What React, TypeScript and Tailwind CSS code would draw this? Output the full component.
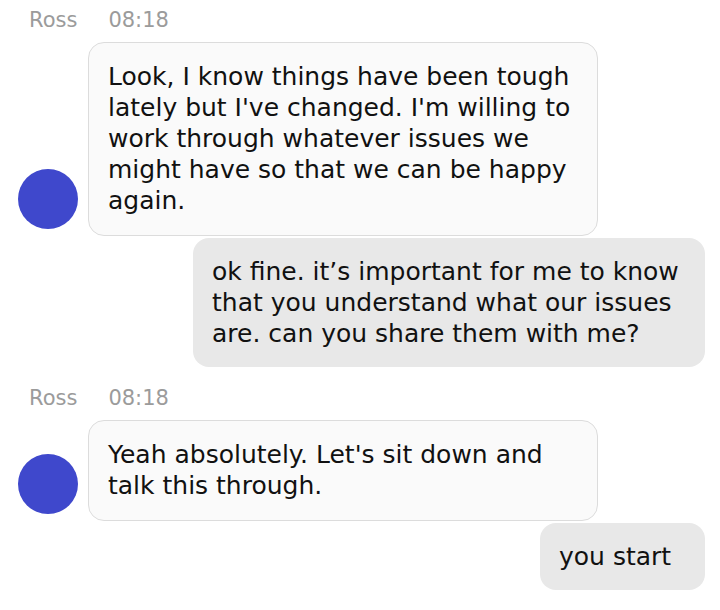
const font = { fontFamily: '"DejaVu Sans", "Liberation Sans", sans-serif' };

type Msg =
  | { kind: "head"; name: string; time: string }
  | { kind: "them"; text: string }
  | { kind: "me"; text: string };

const messages: Msg[] = [
  { kind: "head", name: "Ross", time: "08:18" },
  {
    kind: "them",
    text: "Look, I know things have been tough lately but I've changed. I'm willing to work through whatever issues we might have so that we can be happy again.",
  },
  {
    kind: "me",
    text: "ok fine. it’s important for me to know that you understand what our issues are. can you share them with me?",
  },
  { kind: "head", name: "Ross", time: "08:18" },
  { kind: "them", text: "Yeah absolutely. Let's sit down and talk this through." },
  { kind: "me", text: "you start" },
  { kind: "head", name: "Ross", time: "08:18" },
];

const Header = ({ name, time, first }: { name: string; time: string; first: boolean }) => (
  <div
    className={`flex gap-[31px] pl-[29px] text-[21px] leading-[24px] text-[#9b9b9b] ${
      first ? "mt-[8px]" : "mt-[19px]"
    } mb-[10px]`}
  >
    <span>{name}</span>
    <span>{time}</span>
  </div>
);

const Theirs = ({ text }: { text: string }) => (
  <div className="flex items-end gap-[10px] pl-[18px]">
    <div className="w-[60px] h-[60px] rounded-full bg-[#3f48cc] mb-[7px] shrink-0" />
    <div className="w-[510px] rounded-[16px] border border-[#dcdcdc] bg-[#fafafa] px-[19px] pt-[18px] pb-[19px] text-[25px] leading-[31px] text-[#111]">
      {text}
    </div>
  </div>
);

const Mine = ({ text }: { text: string }) => (
  <div className="flex justify-end pr-[15px] mt-[2px]">
    <div className="max-w-[512px] min-w-[165px] rounded-[16px] bg-[#e8e8e8] px-[19px] py-[18px] text-[25px] leading-[31px] text-[#111]">
      {text}
    </div>
  </div>
);

export default function App() {
  return (
    <div className="w-[720px] h-[610px] overflow-hidden bg-white" style={font}>
      {messages.map((m, i) => {
        if (m.kind === "head") return <Header key={i} name={m.name} time={m.time} first={i === 0} />;
        if (m.kind === "them") return <Theirs key={i} text={m.text} />;
        return <Mine key={i} text={m.text} />;
      })}
    </div>
  );
}
